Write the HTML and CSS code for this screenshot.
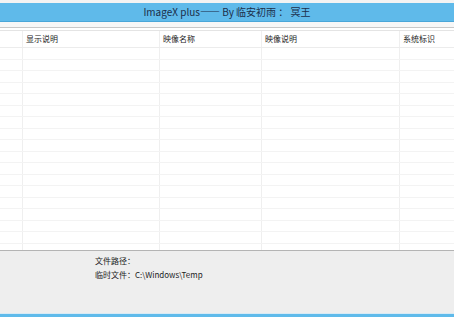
FILE: index.html
```html
<!DOCTYPE html>
<html lang="zh-cn">
<head>
    <meta charset="UTF-8">
    <title>ImageX plus</title>
    <link rel="stylesheet" href="styles.css">
</head>
<body>
    <div class="window">
        <div class="top-strip"></div>
        <div class="title-bar">ImageX plus—— By 临安初雨 ： 冥王</div>
        <div class="gap"></div>
        <div class="grid">
            <div class="row head">
                <div class="cell c0"></div>
                <div class="cell c1">显示说明</div>
                <div class="cell c2">映像名称</div>
                <div class="cell c3">映像说明</div>
                <div class="cell c4">系统标识</div>
            </div>
            <div class="row"><div class="cell c0"></div><div class="cell c1"></div><div class="cell c2"></div><div class="cell c3"></div><div class="cell c4"></div></div>
            <div class="row"><div class="cell c0"></div><div class="cell c1"></div><div class="cell c2"></div><div class="cell c3"></div><div class="cell c4"></div></div>
            <div class="row"><div class="cell c0"></div><div class="cell c1"></div><div class="cell c2"></div><div class="cell c3"></div><div class="cell c4"></div></div>
            <div class="row"><div class="cell c0"></div><div class="cell c1"></div><div class="cell c2"></div><div class="cell c3"></div><div class="cell c4"></div></div>
            <div class="row"><div class="cell c0"></div><div class="cell c1"></div><div class="cell c2"></div><div class="cell c3"></div><div class="cell c4"></div></div>
            <div class="row"><div class="cell c0"></div><div class="cell c1"></div><div class="cell c2"></div><div class="cell c3"></div><div class="cell c4"></div></div>
            <div class="row"><div class="cell c0"></div><div class="cell c1"></div><div class="cell c2"></div><div class="cell c3"></div><div class="cell c4"></div></div>
            <div class="row"><div class="cell c0"></div><div class="cell c1"></div><div class="cell c2"></div><div class="cell c3"></div><div class="cell c4"></div></div>
            <div class="row"><div class="cell c0"></div><div class="cell c1"></div><div class="cell c2"></div><div class="cell c3"></div><div class="cell c4"></div></div>
            <div class="row"><div class="cell c0"></div><div class="cell c1"></div><div class="cell c2"></div><div class="cell c3"></div><div class="cell c4"></div></div>
            <div class="row"><div class="cell c0"></div><div class="cell c1"></div><div class="cell c2"></div><div class="cell c3"></div><div class="cell c4"></div></div>
            <div class="row"><div class="cell c0"></div><div class="cell c1"></div><div class="cell c2"></div><div class="cell c3"></div><div class="cell c4"></div></div>
            <div class="row"><div class="cell c0"></div><div class="cell c1"></div><div class="cell c2"></div><div class="cell c3"></div><div class="cell c4"></div></div>
            <div class="row"><div class="cell c0"></div><div class="cell c1"></div><div class="cell c2"></div><div class="cell c3"></div><div class="cell c4"></div></div>
            <div class="row"><div class="cell c0"></div><div class="cell c1"></div><div class="cell c2"></div><div class="cell c3"></div><div class="cell c4"></div></div>
            <div class="row"><div class="cell c0"></div><div class="cell c1"></div><div class="cell c2"></div><div class="cell c3"></div><div class="cell c4"></div></div>
            <div class="row"><div class="cell c0"></div><div class="cell c1"></div><div class="cell c2"></div><div class="cell c3"></div><div class="cell c4"></div></div>
            <div class="row"><div class="cell c0"></div><div class="cell c1"></div><div class="cell c2"></div><div class="cell c3"></div><div class="cell c4"></div></div>
        </div>
        <div class="footer">
            <div class="info">
                <div>文件路径：</div>
                <div>临时文件：C:\Windows\Temp</div>
            </div>
        </div>
        <div class="bottom-bar"></div>
    </div>
</body>
</html>
```

FILE: styles.css
```css
body {
    margin: 0;
    padding: 0;
    font-family: "Noto Sans CJK SC", "Liberation Sans", sans-serif;
    background: #eeeeee;
}
.window {
    width: 454px;
    height: 317px;
    display: flex;
    flex-direction: column;
    overflow: hidden;
}
.top-strip {
    flex: none;
    height: 3px;
    background: #f3f3f3;
}
.title-bar {
    flex: none;
    height: 18px;
    background-color: #5fbaea;
    color: #1c2f4a;
    font-size: 10px;
    line-height: 18px;
    text-align: center;
    border-bottom: 1px solid #4aa6d8;
}
.gap {
    flex: none;
    height: 5px;
    background: #f7f7f7;
    border-bottom: 1px solid #c8c8c8;
}
.grid {
    flex: none;
    background: #fff;
    height: 222px;
    overflow: hidden;
    border-bottom: 1px solid #b4b4b4;
}
.row {
    display: flex;
    height: 11.5px;
    border-bottom: 1px solid #f3f3f3;
    box-sizing: border-box;
}
.row.head {
    height: 18px;
    margin-top: 2px;
    border-top: 1px solid #e4e4e4;
    border-bottom: 1px solid #ececec;
}
.cell {
    border-right: 1px solid #efefef;
    font-size: 8px;
    line-height: 16px;
    color: #222;
    padding-left: 3px;
    box-sizing: border-box;
    white-space: nowrap;
}
.c0 { width: 23px; padding-left: 0; }
.c1 { width: 137px; }
.c2 { width: 102px; }
.c3 { width: 138px; }
.c4 { flex: 1; border-right: none; }
.footer {
    flex: 1;
    background: #eeeeee;
    padding: 3px 0 0 95px;
}
.info {
    font-size: 8px;
    line-height: 14px;
    color: #222;
}
.bottom-bar {
    flex: none;
    height: 3px;
    background: #5fbaea;
    border-top: 1px solid #d7eaf5;
}
```
